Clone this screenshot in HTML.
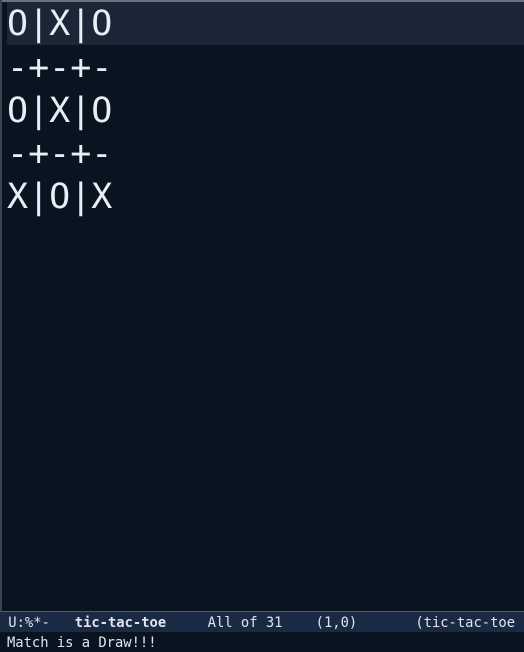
<!DOCTYPE html>
<html><head><style>
html,body{margin:0;padding:0;}
body{width:524px;height:647px;background:#0a1421;position:relative;overflow:hidden;font-family:"DejaVu Sans Mono","Liberation Mono",monospace;color:#e8eef6;}
.top{position:absolute;left:0;top:0;width:524px;height:2px;background:#6b7380;}
.left{position:absolute;left:0;top:0;width:2px;height:612px;background:#3a4250;}
.hl{position:absolute;left:7px;top:2px;width:517px;height:43px;background:#1b2637;}
.l{position:absolute;left:7px;font-size:35px;line-height:43px;white-space:pre;}
.mode{position:absolute;left:0;top:611px;width:524px;height:20px;background:#1a2a44;border-top:1px solid #4a5a78;font-size:13.8px;line-height:22px;white-space:pre;color:#dfe6ef;}
.echo{position:absolute;left:7px;top:634px;font-size:13.8px;line-height:18px;white-space:pre;color:#dfe6ef;}
</style></head><body>
<div class="top"></div><div class="left"></div>
<div class="hl"></div>
<div class="l" style="top:3px">O|X|O</div>
<div class="l" style="top:47px">-+-+-</div>
<div class="l" style="top:90px">O|X|O</div>
<div class="l" style="top:133px">-+-+-</div>
<div class="l" style="top:176px">X|O|X</div>
<div class="mode"> U:%*-   <b>tic-tac-toe</b>     All of 31    (1,0)       (tic-tac-toe</div>
<div class="echo">Match is a Draw!!!</div>
</body></html>
